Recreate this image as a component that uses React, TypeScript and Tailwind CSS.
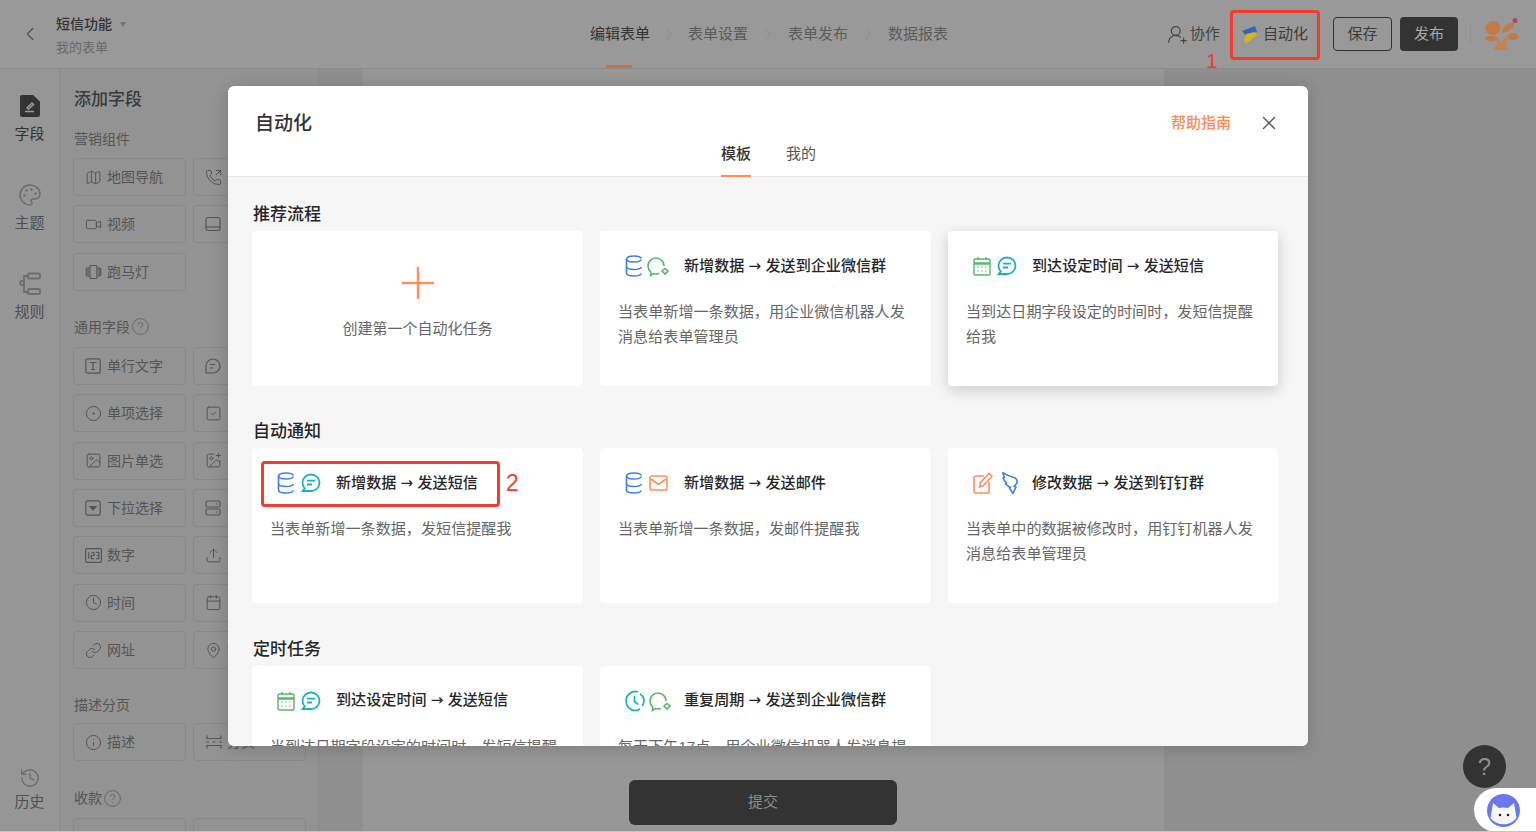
import type { ReactNode } from "react";
import {
  Calendar,
  ChevronLeft,
  ChevronRight,
  CircleDot,
  CircleHelp,
  Clock,
  History,
  Image,
  ImagePlus,
  Info,
  Link,
  Map,
  MapPin,
  Palette,
  PhoneOutgoing,
  SquareCheck,
  Upload,
  UserRoundPlus,
  Video,
  X,
} from "lucide-react";

const blue = "#3f7fea";
const green = "#55b96a";
const teal = "#17b3bd";
const orange = "#ff8f5c";

function DbIcon() {
  return (
    <svg width="18" height="24" viewBox="0 0 18 24" fill="none" stroke={blue} strokeWidth="1.6">
      <path d="M16.500 4.500C15.500 2.500 12.500 2 9 2 5 2 1.500 3 1.500 5v14c0 2 3.500 3 7.500 3 3.500 0 6.500-.5 7.500-2.500" />
      <path d="M1.500 5c0 2 3.500 3 7.500 3 3.500 0 6.500-.5 7.500-2.500M1.500 12.500c0 2 3.500 3 7.500 3 3.500 0 6.500-.5 7.500-2.500" />
    </svg>
  );
}

function WechatIcon() {
  return (
    <svg width="22" height="24" viewBox="0 0 22 24" fill="none" stroke={green} strokeWidth="1.6" className="-ml-[2px]">
      <path d="M12 19.500c-1 .3-2 .5-3 .5-1 0-1.800-.1-2.600-.4L3.500 21.500l.3-3.500C2.100 16.500 1 14.500 1 12c0-4.500 3.600-8 8-8s8 3.500 8 8" />
      <path d="M18 14.500l3 2.500-3 3-3-3z" />
    </svg>
  );
}

function SmsIcon() {
  return (
    <svg width="20" height="20" viewBox="0 0 20 20" fill="none" stroke={teal} strokeWidth="1.800">
      <path d="M10 1.500c4.700 0 8.500 3.600 8.500 8.200S14.700 18 10 18H1.800l2-2.600C2.300 13.900 1.500 12 1.500 9.700 1.500 5.100 5.300 1.500 10 1.500z" />
      <path d="M6 7.700h8M6 11.500h5" />
    </svg>
  );
}

function CalendarIcon() {
  return (
    <svg width="18" height="20" viewBox="0 0 18 20" fill="none" stroke={green} strokeWidth="1.4">
      <rect x="1" y="3" width="16" height="16" rx="1.500" />
      <path d="M1 7.500h16" strokeWidth="2.500" />
      <path d="M5 1v3M13 1v3" />
      <path d="M4.500 11h1.500M8.200 11h1.500M12 11h1.500M4.500 15h1.500M8.200 15h1.500M12 15h1.500" strokeWidth="1.200" />
    </svg>
  );
}

function MailIcon() {
  return (
    <svg width="19" height="18" viewBox="0 0 19 18" fill="none" stroke={orange} strokeWidth="1.600">
      <rect x="1" y="2" width="17" height="14" rx="1.800" />
      <path d="M2 5l7.500 5.500L17 5" />
    </svg>
  );
}

function EditIcon() {
  return (
    <svg width="20" height="22" viewBox="0 0 20 22" fill="none" stroke={orange} strokeWidth="1.600">
      <path d="M11 4H3a2 2 0 0 0-2 2v13a2 2 0 0 0 2 2h11a2 2 0 0 0 2-2v-9" />
      <path d="M6.500 15l1-4.500L16 1.500l3 3-8.500 9z" />
    </svg>
  );
}

function DingIcon() {
  return (
    <svg width="18" height="24" viewBox="0 0 18 24" fill="none" stroke={blue} strokeWidth="1.600" strokeLinejoin="round" className="ml-[2px]">
      <path d="M2 1.500c0 2 .5 3.500 1.500 5L2 7c.8 2 2 3.800 3.500 5.200L4.500 13c1.500 1.500 3 2.500 5 3.200L8.500 17l3.500 5.500 3-6.500-2-.5 3-3.500c.5-2-.2-3.500-1.500-5-3.500-1-10-3-12.500-5.500z" />
    </svg>
  );
}

function ClockIcon() {
  return (
    <svg width="20" height="22" viewBox="0 0 20 22" fill="none" stroke={teal} strokeWidth="1.700">
      <path d="M13 2C10.500 1 7.500 1.400 5 3.300 2.500 5.200 1 8 1 11c0 5 4 9.500 9 9.500 2 0 3.600-.5 5-1.500" />
      <path d="M9.500 6v5.500l3.500 3" />
      <path d="M15 4c2.500 1.500 4 4 4 7s-1 4-2 5" />
    </svg>
  );
}

function BoltIcon() {
  return (
    <svg width="16" height="19" viewBox="0 0 16 19">
      <path d="M0 6L13 1l2 6L5 12z" fill="#2d66bd" />
      <path d="M13 7l2 3L5 18l-3-1 2-8z" fill="#d9b21e" />
    </svg>
  );
}

function TreeLogo() {
  return (
    <svg width="36" height="32" viewBox="0 -1 36 32">
      <path d="M8 31h15c-3-4-3-6 1-12l-3-1-5 6-4-7-2.500 1c3.500 5 3.500 9-1.500 13z" fill="#c9804e" />
      <ellipse cx="8" cy="9" rx="7.500" ry="7" fill="#c37a47" />
      <ellipse cx="6" cy="19.500" rx="6" ry="2.800" fill="#c37a47" />
      <path d="M17 14c0-6 5-10 12-10.500.5 5-5 10-12 10.500z" fill="#c37a47" />
      <ellipse cx="28" cy="17.500" rx="5.500" ry="3.500" fill="#c37a47" />
      <circle cx="30" cy="1.500" r="2.500" fill="#b8455c" />
    </svg>
  );
}

function FieldIcon() {
  return (
    <svg width="20" height="22" viewBox="0 0 20 22" className="text-[#333333]">
      <path d="M2 0h11l7 6.500V20a2 2 0 0 1-2 2H2a2 2 0 0 1-2-2V2a2 2 0 0 1 2-2z" fill="currentColor" />
      <path d="M7 13l5-5 1.500 1.500-5 4.500zM5 16.500h9" stroke="#9a9a9a" strokeWidth="1.500" fill="none" />
    </svg>
  );
}

function RuleIcon() {
  return (
    <svg width="22" height="24" viewBox="0 0 22 24" fill="none" stroke="#6d6d6d" strokeWidth="1.800">
      <rect x="9" y="1.500" width="12" height="5" rx="1" />
      <rect x="9" y="17" width="12" height="5" rx="1" />
      <path d="M9 4H5v16h4" />
      <circle cx="3" cy="11" r="2" />
    </svg>
  );
}

const g = "#555555";

function TextFieldIcon() {
  return (
    <svg width="16" height="16" viewBox="0 0 16 16" fill="none" stroke={g} strokeWidth="1.200">
      <rect x=".8" y=".8" width="14.400" height="14.400" rx="2" />
      <path d="M4.500 4.500h7M8 4.500v7M6 11.500h4" />
    </svg>
  );
}

function DropdownIcon() {
  return (
    <svg width="16" height="16" viewBox="0 0 16 16" fill="none" stroke={g} strokeWidth="1.200">
      <rect x=".8" y=".8" width="14.400" height="14.400" rx="2" />
      <path d="M5 6.500h6L8 10z" fill={g} />
    </svg>
  );
}

function NumberIcon() {
  return (
    <svg width="17" height="15" viewBox="0 0 16 14" fill="none" stroke={g} strokeWidth="1.100">
      <rect x=".6" y=".6" width="14.800" height="12.800" rx="1" />
      <path d="M3.500 4v6M6 4.500h2.500v2.500H6V10h2.500M10.500 4H13v6h-2.500M11 7h2" />
    </svg>
  );
}

function CarouselIcon() {
  return (
    <svg width="17" height="16" viewBox="0 0 16 16" fill="none" stroke={g} strokeWidth="1.200">
      <rect x="4.500" y="1.500" width="7" height="13" rx="1" />
      <path d="M2.500 3v10M.8 4v8M13.500 3v10M15.200 4v8" />
    </svg>
  );
}

function BookIcon() {
  return (
    <svg width="16" height="16" viewBox="0 0 16 16" fill="none" stroke={g} strokeWidth="1.200">
      <rect x="1" y="1.500" width="14" height="13" rx="2" />
      <path d="M1 11h14" />
    </svg>
  );
}

function ChatIcon() {
  return (
    <svg width="16" height="16" viewBox="0 0 16 16" fill="none" stroke={g} strokeWidth="1.200">
      <path d="M8 1a7 7 0 1 1 0 14H1V8a7 7 0 0 1 7-7z" />
      <path d="M5 6.500h5M5 10h3" />
    </svg>
  );
}

function StackIcon() {
  return (
    <svg width="16" height="16" viewBox="0 0 16 16" fill="none" stroke={g} strokeWidth="1.200">
      <rect x="1" y="1" width="14" height="6" rx="1.500" />
      <rect x="1" y="9" width="14" height="6" rx="1.500" />
      <path d="M11 4h1.500M11 12h1.500" />
    </svg>
  );
}

function PageBreakIcon() {
  return (
    <svg width="18" height="14" viewBox="0 0 18 14" fill="none" stroke={g} strokeWidth="1.200">
      <path d="M2 .5v3h14v-3M1 7h3M7.500 7h3M14 7h3M2 13.500v-3h14v3" />
    </svg>
  );
}

const ic = "w-[17px] h-[17px] text-[#555555] shrink-0";

const marketing: [ReactNode, string, ReactNode, string][] = [
  [<Map className={ic} strokeWidth={1.4} />, "地图导航", <PhoneOutgoing className={ic} strokeWidth={1.4} />, "电话"],
  [<Video className={ic} strokeWidth={1.4} />, "视频", <BookIcon />, "表格"],
];

const common: [ReactNode, string, ReactNode, string][] = [
  [<TextFieldIcon />, "单行文字", <ChatIcon />, "多行文字"],
  [<CircleDot className={ic} strokeWidth={1.4} />, "单项选择", <SquareCheck className={ic} strokeWidth={1.4} />, "多项选择"],
  [<Image className={ic} strokeWidth={1.4} />, "图片单选", <ImagePlus className={ic} strokeWidth={1.4} />, "图片多选"],
  [<DropdownIcon />, "下拉选择", <StackIcon />, "级联选择"],
  [<NumberIcon />, "数字", <Upload className={ic} strokeWidth={1.4} />, "上传"],
  [<Clock className={ic} strokeWidth={1.4} />, "时间", <Calendar className={ic} strokeWidth={1.4} />, "日期"],
  [<Link className={ic} strokeWidth={1.4} />, "网址", <MapPin className={ic} strokeWidth={1.4} />, "地址"],
];

function Cell({ icon, label }: { icon?: ReactNode; label?: string }) {
  return (
    <div className="h-[38px] flex items-center rounded border border-[#888888] pl-[11px] text-sm text-[#555555]">
      <span className="w-[22px] flex justify-start shrink-0">{icon}</span>
      <span className="whitespace-nowrap">{label}</span>
    </div>
  );
}

function CellGrid({ rows }: { rows: [ReactNode, string, ReactNode, string][] }) {
  return (
    <div className="mt-[8px] grid grid-cols-[113px_113px] gap-x-[7px] gap-y-[9.400px]">
      {rows.flatMap((r, i) => [
        <Cell key={`${i}a`} icon={r[0]} label={r[1]} />,
        <Cell key={`${i}b`} icon={r[2]} label={r[3]} />,
      ])}
    </div>
  );
}

function Help() {
  return <CircleHelp className="w-[19px] h-[19px] text-[#666666] ml-px" strokeWidth={1.2} />;
}

function RailItem({ icon, label, active, tight }: { icon: ReactNode; label: string; active?: boolean; tight?: boolean }) {
  return (
    <div className="flex flex-col items-center">
      <div className="h-6 flex items-center">{icon}</div>
      <span className={`${tight ? "" : "mt-[4px]"} text-[15px] leading-6 ${active ? "text-[#333333]" : "text-[#4f4f4f]"}`}>{label}</span>
    </div>
  );
}

function Header() {
  return (
    <header className="h-[69px] shrink-0 flex items-center border-b border-[#8c8c8c] bg-[#999999]">
      <div className="w-[590px] shrink-0 flex items-center">
        <ChevronLeft className="ml-[19px] w-[22px] h-[22px] text-[#555555]" strokeWidth={1.5} />
        <div className="ml-[15px] pt-[3px]">
          <div className="flex items-center text-sm leading-5 font-medium text-[#333333]">
            短信功能
            <span className="ml-[8px] border-x-[3.500px] border-t-[5px] border-x-transparent border-t-[#777777]" />
          </div>
          <div className="mt-[5px] text-[13px] leading-[18px] text-[#6a6a6a]">我的表单</div>
        </div>
      </div>
      <nav className="relative h-full flex items-center gap-[9px] text-[15px] text-[#5c5c5c]">
        <span className="text-[#333333]">编辑表单</span>
        <ChevronRight className="mx-[1px] w-[18px] h-[18px] text-[#858585]" strokeWidth={1} />
        <span>表单设置</span>
        <ChevronRight className="mx-[2px] w-[18px] h-[18px] text-[#858585]" strokeWidth={1} />
        <span>表单发布</span>
        <ChevronRight className="mx-[2px] w-[18px] h-[18px] text-[#858585]" strokeWidth={1} />
        <span>数据报表</span>
        <span className="absolute bottom-0 left-[16px] w-[26px] h-[3px] bg-[#c47543]" />
      </nav>
      <div className="flex-1 flex items-center justify-end pr-[15px]">
        <div className="relative flex items-center text-[15px] text-[#444444]">
          <UserRoundPlus className="w-[21px] h-[21px] text-[#444444] mr-[2px]" strokeWidth={1.4} />
          协作
          <span className="absolute left-[39px] top-[26px] text-[21px] leading-6 text-[#ef3b30]">1</span>
        </div>
        <div className="ml-[10px] mt-[2px] pb-[2px] w-[90px] h-[50px] flex items-center justify-center gap-[5px] rounded border-[3px] border-[#f23c2e] text-[15px] text-[#3c3c3c]">
          <BoltIcon />
          自动化
        </div>
        <button className="ml-[13px] w-[59px] h-[34px] rounded border border-[#333333] text-[15px] text-[#3c3c3c]">保存</button>
        <button className="ml-[8px] w-[58px] h-[34px] rounded bg-[#333333] text-[15px] text-[#a8a8a8]">发布</button>
        <span className="ml-[12px] w-px h-[20px] bg-[#909090]" />
        <span className="ml-[14px] flex"><TreeLogo /></span>
      </div>
    </header>
  );
}

function Sidebar() {
  return (
    <aside className="w-[60px] shrink-0 h-full flex flex-col border-r border-[#8b8b8b] bg-[#969696] pt-[25px] pb-[18px]">
      <RailItem active icon={<FieldIcon />} label="字段" />
      <div className="mt-[37px]">
        <RailItem icon={<Palette className="w-6 h-6 text-[#6d6d6d]" strokeWidth={1.5} />} label="主题" />
      </div>
      <div className="mt-[37px]">
        <RailItem icon={<RuleIcon />} label="规则" />
      </div>
      <div className="mt-auto">
        <RailItem tight icon={<History className="w-[22px] h-[22px] text-[#6d6d6d]" strokeWidth={1.5} />} label="历史" />
      </div>
    </aside>
  );
}

function FieldPanel() {
  return (
    <div className="w-[259px] shrink-0 h-full overflow-hidden border-r border-[#8b8b8b] bg-[#939393] pl-[13px] pt-[19px]">
      <div className="pl-px text-[17px] leading-6 font-medium text-[#3a3a3a]">添加字段</div>
      <div className="pl-px mt-[17px] text-sm leading-5 text-[#555555]">营销组件</div>
      <div className="pt-px">
        <CellGrid rows={marketing} />
      </div>
      <div className="mt-[9.400px] w-[113px]">
        <Cell icon={<CarouselIcon />} label="跑马灯" />
      </div>
      <div className="pl-px mt-[24px] flex items-center h-6 text-sm text-[#555555]">通用字段<Help /></div>
      <CellGrid rows={common} />
      <div className="pl-px mt-[26px] text-sm leading-5 text-[#555555]">描述分页</div>
      <CellGrid rows={[[<Info className={ic} strokeWidth={1.4} />, "描述", <PageBreakIcon />, "分页"]]} />
      <div className="pl-px mt-[25px] flex items-center h-6 text-sm text-[#555555]">收款<Help /></div>
      <CellGrid rows={[[null, "", null, ""]]} />
    </div>
  );
}

type CardProps = {
  icons: ReactNode;
  from: string;
  to: string;
  desc: string;
  lifted?: boolean;
  annotated?: boolean;
};

function Card({ icons, from, to, desc, lifted, annotated }: CardProps) {
  return (
    <div className={`relative h-[155px] rounded bg-white ${lifted ? "shadow-[0_4px_14px_rgba(0,0,0,0.18)]" : ""}`}>
      <div className="h-[70px] flex items-center">
        <div className="ml-[25px] w-[60px] shrink-0 flex items-center gap-[6px]">{icons}</div>
        <span className="-ml-px text-[15.100px] font-medium text-[#262626] whitespace-nowrap">
          {from} <span className="font-['DejaVu_Sans'] font-normal">→</span> {to}
        </span>
      </div>
      <p className="-mt-[2px] px-[18px] text-[15.100px] leading-[25px] text-[#666666]">{desc}</p>
      {annotated && (
        <>
          <div className="absolute left-[9px] top-[13px] w-[239px] h-[46px] rounded border-[3px] border-[#f23c2e]" />
          <span className="absolute left-[254px] top-[21px] text-[23px] leading-7 text-[#ef3b30]">2</span>
        </>
      )}
    </div>
  );
}

function Section({ title, children }: { title: string; children: ReactNode }) {
  return (
    <section className="mb-[33.400px]">
      <h3 className="h-[26px] pl-px text-[17px] leading-[26px] font-medium text-[#262626]">{title}</h3>
      <div className="mt-[3px] grid grid-cols-[331px_331px_330px] gap-x-[17px] gap-y-[17px]">{children}</div>
    </section>
  );
}

function AutomationModal() {
  return (
    <div className="absolute left-[228px] top-[86px] w-[1080px] h-[660px] flex flex-col overflow-hidden rounded-md bg-white shadow-[0_2px_16px_rgba(0,0,0,0.18)]">
      <div className="relative h-[91px] shrink-0 border-b border-[#e8e8e8]">
        <h2 className="absolute left-[27px] top-[24px] text-[19px] leading-7 font-medium text-[#333333]">自动化</h2>
        <div className="absolute right-[77px] top-[27px] text-[15px] leading-5 font-medium text-[#ff8c4d]">帮助指南</div>
        <X className="absolute right-[28px] top-[26px] w-[22px] h-[22px] text-[#555555]" strokeWidth={1.5} />
        <div className="h-full flex items-start justify-center gap-[35px] pt-[57px] text-[15px] leading-[22px] text-[#555555]">
          <div className="relative ml-[1px] font-medium text-[#333333]">
            模板
            <span className="absolute left-0 right-0 top-[32px] h-[2px] bg-[#ff8c5a]" />
          </div>
          <div>我的</div>
        </div>
      </div>
      <div className="flex-1 overflow-hidden bg-[#f6f6f6] px-[24px] pt-[25px]">
        <Section title="推荐流程">
          <div className="h-[155px] rounded bg-white flex flex-col items-center pt-[35px]">
            <svg width="34" height="34" viewBox="0 0 34 34" stroke="#ff8f5c" strokeWidth="2.400">
              <path d="M17 1v32M1 17h32" />
            </svg>
            <span className="mt-[18px] text-[15px] leading-[22px] text-[#666666]">创建第一个自动化任务</span>
          </div>
          <Card icons={<><DbIcon /><WechatIcon /></>} from="新增数据" to="发送到企业微信群" desc="当表单新增一条数据，用企业微信机器人发消息给表单管理员" />
          <Card lifted icons={<><CalendarIcon /><SmsIcon /></>} from="到达设定时间" to="发送短信" desc="当到达日期字段设定的时间时，发短信提醒给我" />
        </Section>
        <Section title="自动通知">
          <Card annotated icons={<><DbIcon /><SmsIcon /></>} from="新增数据" to="发送短信" desc="当表单新增一条数据，发短信提醒我" />
          <Card icons={<><DbIcon /><MailIcon /></>} from="新增数据" to="发送邮件" desc="当表单新增一条数据，发邮件提醒我" />
          <Card icons={<><EditIcon /><DingIcon /></>} from="修改数据" to="发送到钉钉群" desc="当表单中的数据被修改时，用钉钉机器人发消息给表单管理员" />
        </Section>
        <Section title="定时任务">
          <Card icons={<><CalendarIcon /><SmsIcon /></>} from="到达设定时间" to="发送短信" desc="当到达日期字段设定的时间时，发短信提醒我" />
          <Card icons={<><ClockIcon /><WechatIcon /></>} from="重复周期" to="发送到企业微信群" desc="每天下午17点，用企业微信机器人发消息提醒" />
        </Section>
      </div>
    </div>
  );
}

export default function App() {
  return (
    <div className="relative w-[1536px] h-[832px] overflow-hidden flex flex-col bg-[#8f8f8f] font-['Liberation_Sans','Noto_Sans_CJK_SC',sans-serif]">
      <Header />
      <div className="flex-1 min-h-0 flex">
        <Sidebar />
        <FieldPanel />
        <main className="flex-1 pl-[44px]">
          <div className="w-[801px] h-full flex flex-col items-center justify-end bg-[#979797] pb-[7px] pr-[1px]">
            <button className="w-[268px] h-[45px] rounded-md bg-[#333333] text-[15px] text-[#8c8c8c]">提交</button>
          </div>
        </main>
      </div>
      <AutomationModal />
      <div className="absolute right-[30px] bottom-[44px] w-[43px] h-[43px] rounded-full bg-[#333333] flex items-center justify-center text-[24px] text-[#8f8f8f]">?</div>
      <div className="absolute right-0 bottom-0 w-[62px] h-[44px] rounded-l-[22px] bg-white flex items-center pl-[13px]">
        <svg width="33" height="33" viewBox="0 0 33 33">
          <circle cx="16.500" cy="16.500" r="16.500" fill="#6a77ee" />
          <path d="M6 9l6 5q4.500-1 9 0l6-5 2.500 15A16.500 16.500 0 0 1 3.500 24z" fill="#f7f6fd" />
          <circle cx="13" cy="21" r="1.300" fill="#222222" />
          <circle cx="21" cy="21" r="1.300" fill="#222222" />
        </svg>
      </div>
      <div className="absolute left-0 right-0 bottom-0 h-px bg-[#b4cdc8]" />
    </div>
  );
}
